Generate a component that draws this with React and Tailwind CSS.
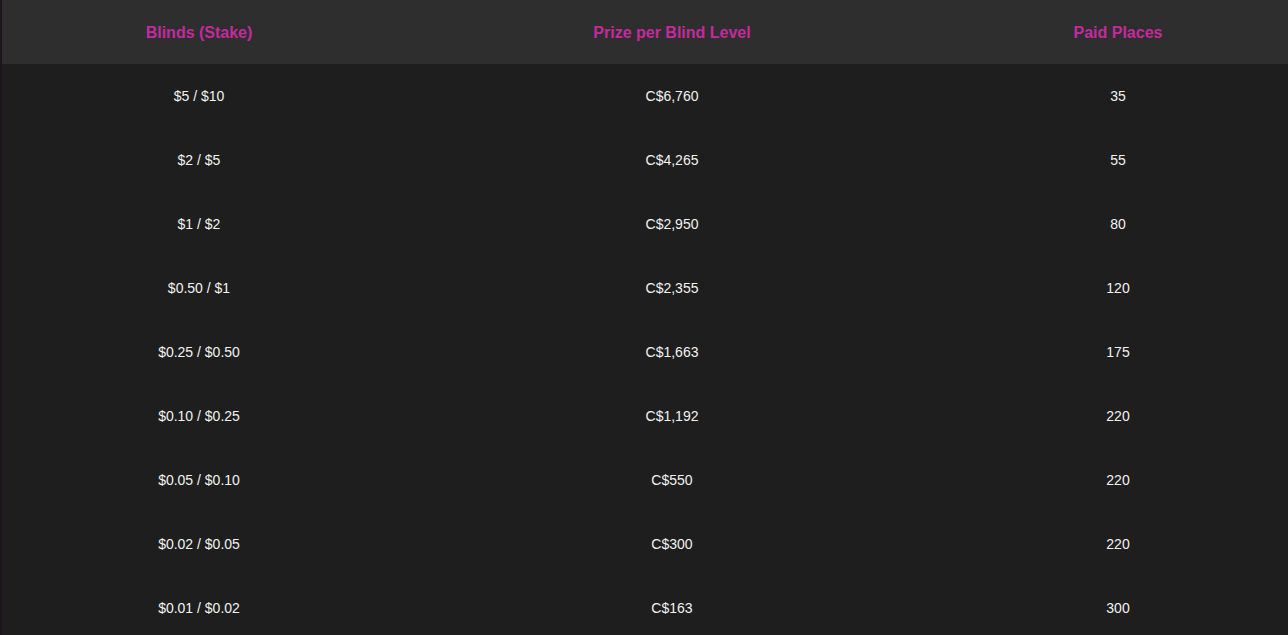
const ROWS = [
  ['$5 / $10', 'C$6,760', '35'],
  ['$2 / $5', 'C$4,265', '55'],
  ['$1 / $2', 'C$2,950', '80'],
  ['$0.50 / $1', 'C$2,355', '120'],
  ['$0.25 / $0.50', 'C$1,663', '175'],
  ['$0.10 / $0.25', 'C$1,192', '220'],
  ['$0.05 / $0.10', 'C$550', '220'],
  ['$0.02 / $0.05', 'C$300', '220'],
  ['$0.01 / $0.02', 'C$163', '300'],
]

const COLS = 'grid grid-cols-[394px_552px_340px]'

export default function App() {
  return (
    <div className="flex min-h-[635px] bg-[#1e1e1e] font-['Liberation_Sans',Arial,sans-serif]">
      {/* thin accent edge on the left */}
      <div className="w-[2px] shrink-0 bg-[#1f141c]" />
      <div className="flex-1">
        <div className={`${COLS} h-16 items-center bg-[#2e2e2e] pt-0.5 text-[16px] font-bold text-[#c42a9e]`}>
          <div className="text-center">Blinds (Stake)</div>
          <div className="text-center">Prize per Blind Level</div>
          <div className="text-center">Paid Places</div>
        </div>
        {ROWS.map((row, i) => (
          <div key={i} className={`${COLS} h-16 items-center text-[14px] text-[#f2f2f2]`}>
            {row.map((cell, j) => (
              <div key={j} className="text-center">{cell}</div>
            ))}
          </div>
        ))}
      </div>
    </div>
  )
}
